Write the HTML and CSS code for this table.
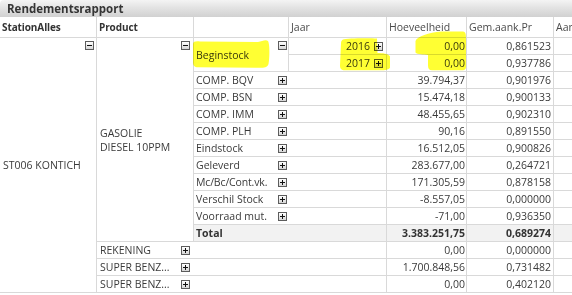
FILE: index.html
```html
<!DOCTYPE html>
<html lang="nl">
<head>
<meta charset="utf-8">
<title>Rendementsrapport</title>
<link rel="stylesheet" href="styles.css">
</head>
<body>
<div class="page">
  <div class="title">Rendementsrapport</div>
  <div class="pivot">
    <div class="c h b">StationAlles</div>
    <div class="c h b">Product</div>
    <div class="c h"></div>
    <div class="c h">Jaar</div>
    <div class="c h">Hoeveelheid</div>
    <div class="c h">Gem.aank.Pr</div>
    <div class="c h last">Aankoopwaarde</div>

    <div class="c top st"><span class="lbl">ST006 KONTICH</span><span class="pm"></span></div>
    <div class="c top prod"><span class="lbl">GASOLIE<br>DIESEL 10PPM</span><span class="pm"></span></div>
    <div class="c top beg"><span class="lbl">Beginstock</span><span class="pm"></span></div>
    <div class="c yr"><span>2016</span><span class="pm plus"></span></div>
    <div class="c n">0,00</div>
    <div class="c n n2">0,861523</div>
    <div class="c"></div>

    <div class="c yr"><span>2017</span><span class="pm plus"></span></div>
    <div class="c n">0,00</div>
    <div class="c n n2">0,937786</div>
    <div class="c"></div>

    <div class="c dim"><div class="in"><span>COMP. BQV</span><span class="pm plus"></span></div></div>
    <div class="c n">39.794,37</div>
    <div class="c n n2">0,901976</div>
    <div class="c"></div>

    <div class="c dim"><div class="in"><span>COMP. BSN</span><span class="pm plus"></span></div></div>
    <div class="c n">15.474,18</div>
    <div class="c n n2">0,900133</div>
    <div class="c"></div>

    <div class="c dim"><div class="in"><span>COMP. IMM</span><span class="pm plus"></span></div></div>
    <div class="c n">48.455,65</div>
    <div class="c n n2">0,902310</div>
    <div class="c"></div>

    <div class="c dim"><div class="in"><span>COMP. PLH</span><span class="pm plus"></span></div></div>
    <div class="c n">90,16</div>
    <div class="c n n2">0,891550</div>
    <div class="c"></div>

    <div class="c dim"><div class="in"><span>Eindstock</span><span class="pm plus"></span></div></div>
    <div class="c n">16.512,05</div>
    <div class="c n n2">0,900826</div>
    <div class="c"></div>

    <div class="c dim"><div class="in"><span>Geleverd</span><span class="pm plus"></span></div></div>
    <div class="c n">283.677,00</div>
    <div class="c n n2">0,264721</div>
    <div class="c"></div>

    <div class="c dim"><div class="in"><span class="tight">Mc/Bc/Cont.vk.</span><span class="pm plus"></span></div></div>
    <div class="c n">171.305,59</div>
    <div class="c n n2">0,878158</div>
    <div class="c"></div>

    <div class="c dim"><div class="in"><span>Verschil Stock</span><span class="pm plus"></span></div></div>
    <div class="c n">-8.557,05</div>
    <div class="c n n2">0,000000</div>
    <div class="c"></div>

    <div class="c dim"><div class="in"><span>Voorraad mut.</span><span class="pm plus"></span></div></div>
    <div class="c n">-71,00</div>
    <div class="c n n2">0,936350</div>
    <div class="c"></div>

    <div class="c dim tot"><div class="in"><span>Total</span></div></div>
    <div class="c n tot">3.383.251,75</div>
    <div class="c n n2 tot">0,689274</div>
    <div class="c tot"></div>

    <div class="c prod2"><div class="in"><span>REKENING</span><span class="pm plus"></span></div></div>
    <div class="c n">0,00</div>
    <div class="c n n2">0,000000</div>
    <div class="c"></div>

    <div class="c prod2"><div class="in"><span>SUPER BENZ...</span><span class="pm plus"></span></div></div>
    <div class="c n">1.700.848,56</div>
    <div class="c n n2">0,731482</div>
    <div class="c"></div>

    <div class="c prod2"><div class="in"><span>SUPER BENZ...</span><span class="pm plus"></span></div></div>
    <div class="c n">0,00</div>
    <div class="c n n2">0,402120</div>
    <div class="c"></div>
  </div>

  <svg class="marks" width="572" height="295" viewBox="0 0 572 295" aria-hidden="true">
    <path d="M193,44 C193,41.5 196,41 200,41.5 L258,42 C262,41 266,39 268,41 C270,44 269.5,60 268.5,64 C267.5,67.5 264,67.8 260,67.8 L198,67.3 C194.5,67.3 193,65.5 193,62 Z"/>
    <path d="M343,39.5 C346,38 371,38 377,38.5 L377.5,53 C382,53 388.5,53.5 390,56.5 L390,67.5 C389.5,70 384,70.5 378,70.3 L345,70.3 C341,70.3 340,68.5 340,65.5 L341,43 C341,41 342,40 343,39.5 Z"/>
    <path d="M415.5,41 C417,36.5 429,32.5 441,31.5 L463,31.5 C466,32 466,35 466,39 L466,67 C466,70 463.5,70.5 460,70.3 L432,70.3 C429,70.3 428,68.5 428,65.5 L428,55 C424,54.5 417,54.5 415.5,52.5 Z"/>
  </svg>
</div>
</body>
</html>
```

FILE: styles.css
```css
html, body {
  margin: 0;
  padding: 0;
  background: #ffffff;
}

.page {
  position: relative;
  width: 572px;
  height: 295px;
  overflow: hidden;
  font-family: "Open Sans", "Noto Sans", "DejaVu Sans", sans-serif;
  font-size: 10.5px;
  color: #3a3a3a;
}

.title {
  height: 17px;
  box-sizing: border-box;
  padding: 1px 0 0 7px;
  line-height: 16px;
  font-size: 11.5px;
  font-weight: 700;
  color: #353535;
  background: linear-gradient(to bottom, #f4f4f4 0%, #e3e3e3 45%, #d1d1d1 100%);
  border-top-left-radius: 4px;
  white-space: nowrap;
}

.pivot {
  display: grid;
  grid-template-columns: 97px 97px 95px 98px 80px 87px 60px;
  grid-template-rows: 21px repeat(15, 17px);
}

.c {
  box-sizing: border-box;
  border-right: 1px solid #d9d9d9;
  border-bottom: 1px solid #d9d9d9;
  line-height: 16px;
  white-space: nowrap;
  overflow: hidden;
  min-width: 0;
}

.h {
  display: flex;
  align-items: center;
  padding: 0 2px;
  color: #4a4a4a;
}

.h.b {
  font-weight: 700;
  font-size: 10px;
  letter-spacing: -0.1px;
  color: #333333;
}

.h.last {
  border-right: 0;
}

.top {
  display: grid;
  grid-template-columns: 1fr auto;
  align-items: center;
  padding: 3px 2px 3px 3px;
}

.top .pm {
  align-self: start;
}

.st {
  grid-row: span 15;
}

.prod {
  grid-row: span 12;
  padding-right: 3px;
}

.prod .lbl {
  line-height: 14px;
  white-space: normal;
}

.beg {
  grid-row: span 2;
  padding: 3px 1px 3px 2px;
}

.yr {
  display: flex;
  justify-content: flex-end;
  align-items: center;
  gap: 4px;
  padding-right: 3px;
}

.n {
  text-align: right;
  padding-right: 1px;
}

.n2 {
  padding-right: 2px;
}

.dim {
  grid-column: span 2;
  display: flex;
  align-items: center;
}

.prod2 {
  grid-column: span 3;
  display: flex;
  align-items: center;
}

.in {
  display: flex;
  justify-content: space-between;
  align-items: center;
  box-sizing: border-box;
}

.dim .in {
  width: 95px;
  padding: 0 2px 0 2px;
}

.prod2 .in {
  width: 97px;
  padding: 0 4px 0 3px;
}

.tight {
  letter-spacing: -0.15px;
}

.tot {
  background: #f2f2f2;
  font-weight: 700;
  color: #333333;
}

.pm {
  flex: none;
  position: relative;
  width: 9px;
  height: 9px;
  box-sizing: border-box;
  border: 1px solid #5c5c5c;
  background: linear-gradient(to bottom, #ffffff, #d6d6d6);
}

.pm::before {
  content: "";
  position: absolute;
  left: 1px;
  right: 1px;
  top: 3px;
  height: 1px;
  background: #111111;
}

.pm.plus::after {
  content: "";
  position: absolute;
  top: 1px;
  bottom: 1px;
  left: 3px;
  width: 1px;
  background: #111111;
}

.marks {
  position: absolute;
  left: 0;
  top: 0;
  pointer-events: none;
  mix-blend-mode: multiply;
  fill: #ffff33;
}
```
